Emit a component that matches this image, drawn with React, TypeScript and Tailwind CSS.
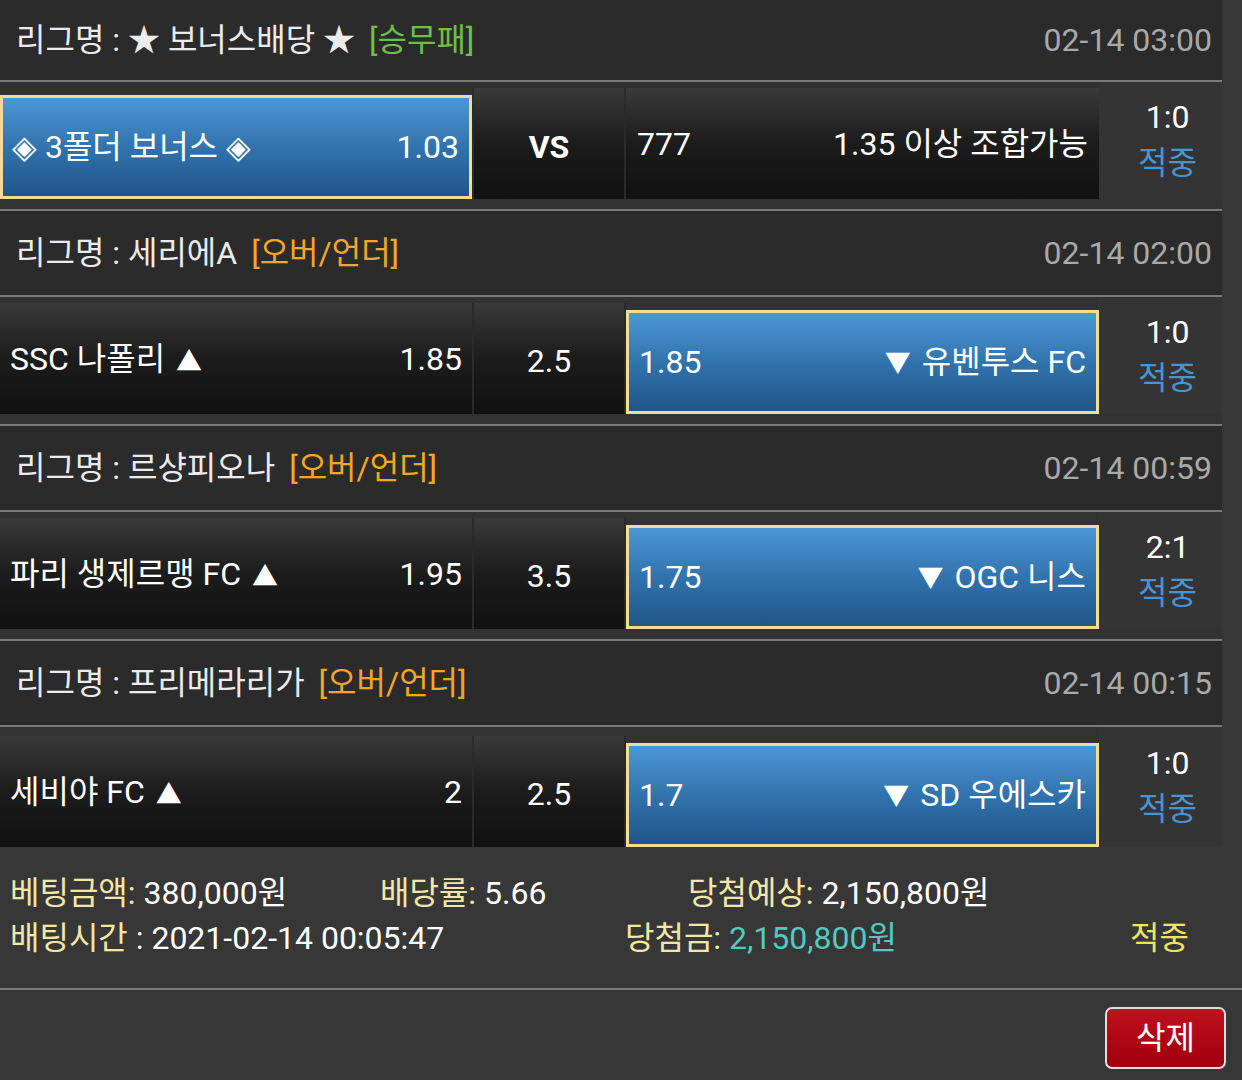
import React from "react";

type Match = {
  league: string;
  tag: string;
  tagColor: string;
  time: string;
  home: string;
  homeOdds: string;
  mid: string;
  midBold?: boolean;
  awayOdds: string;
  away: string;
  pick: "home" | "away";
  score: string;
};

const matches: Match[] = [
  {
    league: "리그명 : ★ 보너스배당 ★",
    tag: "[승무패]",
    tagColor: "text-[#6cc04a]",
    time: "02-14 03:00",
    home: "◈ 3폴더 보너스 ◈",
    homeOdds: "1.03",
    mid: "VS",
    midBold: true,
    awayOdds: "777",
    away: "1.35 이상 조합가능",
    pick: "home",
    score: "1:0",
  },
  {
    league: "리그명 : 세리에A",
    tag: "[오버/언더]",
    tagColor: "text-[#f5a623]",
    time: "02-14 02:00",
    home: "SSC 나폴리 ▲",
    homeOdds: "1.85",
    mid: "2.5",
    awayOdds: "1.85",
    away: "▼ 유벤투스 FC",
    pick: "away",
    score: "1:0",
  },
  {
    league: "리그명 : 르샹피오나",
    tag: "[오버/언더]",
    tagColor: "text-[#f5a623]",
    time: "02-14 00:59",
    home: "파리 생제르맹 FC ▲",
    homeOdds: "1.95",
    mid: "3.5",
    awayOdds: "1.75",
    away: "▼ OGC 니스",
    pick: "away",
    score: "2:1",
  },
  {
    league: "리그명 : 프리메라리가",
    tag: "[오버/언더]",
    tagColor: "text-[#f5a623]",
    time: "02-14 00:15",
    home: "세비야 FC ▲",
    homeOdds: "2",
    mid: "2.5",
    awayOdds: "1.7",
    away: "▼ SD 우에스카",
    pick: "away",
    score: "1:0",
  },
];

const darkCell =
  "h-[111px] bg-gradient-to-b from-[#3a3a3a] via-[#1c1c1c] to-[#111111]";
const pickCell =
  "h-[104px] border-[3px] border-[#f3dc95] bg-gradient-to-b from-[#4c97d6] via-[#3273ad] to-[#1f5689]";

// triangles render smaller than the text around them
const Team = ({ name }: { name: string }) => {
  const parts = name.split(/([▲▼])/);
  return (
    <span className="flex items-center">
      {parts.map((p, i) =>
        p === "▲" ? (
          <span key={i} className="text-[26px] mt-[7px] mx-[3px]">
            {p}
          </span>
        ) : p === "▼" ? (
          <span key={i} className="text-[26px] mt-[1px] mx-[3px]">
            {p}
          </span>
        ) : (
          <span key={i} className="whitespace-pre">
            {p}
          </span>
        )
      )}
    </span>
  );
};

const MatchBlock = ({ m, first, last }: { m: Match; first: boolean; last: boolean }) => {
  return (
    <div>
      <div
        className={`${first ? "h-[80px]" : "h-[84px]"} bg-[#2b2b2b] flex items-center justify-between pl-4 pr-[10px]`}
      >
        <div className="flex items-center gap-[14px] text-[#ebebeb]">
          <span>{m.league}</span>
          <span className={m.tagColor}>{m.tag}</span>
        </div>
        <span className="text-[#a9a9a9]">{m.time}</span>
      </div>
      <div className="h-[2px] bg-[#7a7a7a]" />
      <div
        className={`${last ? "h-[120px] pb-0" : "h-[127px] pb-[10px]"} bg-[#323232] flex items-end`}
      >
        <div
          className={`w-[472px] flex items-center justify-between text-white ${
            m.pick === "home" ? `${pickCell} pl-[9px] pr-[10px]` : `${darkCell} pl-[10px] pr-[10px]`
          }`}
        >
          <Team name={m.home} />
          <span>{m.homeOdds}</span>
        </div>
        <div className="w-[2px] h-[111px] bg-[#2a2a2a]" />
        <div
          className={`w-[150px] ${darkCell} flex items-center justify-center text-white ${
            m.midBold ? "font-bold pt-[6px]" : "pt-[4px]"
          }`}
        >
          {m.mid}
        </div>
        <div className="w-[2px] h-[111px] bg-[#2a2a2a]" />
        <div
          className={`w-[473px] flex items-center justify-between text-white ${
            m.pick === "away" ? `${pickCell} pl-[10px] pr-[10px]` : `${darkCell} pl-[11px] pr-[11px]`
          }`}
        >
          <span>{m.awayOdds}</span>
          <Team name={m.away} />
        </div>
        <div className="flex-1 self-stretch flex flex-col items-center justify-center bg-[#343434] leading-[46px] pl-[14px] pb-[2px]">
          <span className="text-white">{m.score}</span>
          <span className="text-[#4b93cf]">적중</span>
        </div>
      </div>
      {!last && <div className="h-[2px] bg-[#7a7a7a]" />}
    </div>
  );
};

export default function App() {
  return (
    <div
      className="w-[1242px] h-[1080px] bg-[#373737] text-[32px] leading-none overflow-hidden"
      style={{ fontFamily: "Roboto, 'Noto Sans CJK KR', sans-serif" }}
    >
      <div className="w-[1222px]">
        {matches.map((m, i) => (
          <MatchBlock key={i} m={m} first={i === 0} last={i === matches.length - 1} />
        ))}
      </div>

      <div className="h-[141px] flex flex-col justify-center gap-[13px] pb-[4px]">
        <div className="flex items-center">
          <div className="w-[380px] pl-[10px]">
            <span className="text-[#f2e7a6]">베팅금액:</span>
            <span className="text-white"> 380,000원</span>
          </div>
          <div className="w-[308px]">
            <span className="text-[#f2e7a6]">배당률:</span>
            <span className="text-white"> 5.66</span>
          </div>
          <div>
            <span className="text-[#f2e7a6]">당첨예상:</span>
            <span className="text-white"> 2,150,800원</span>
          </div>
        </div>
        <div className="flex items-center">
          <div className="w-[625px] pl-[10px]">
            <span className="text-[#f2e7a6]">배팅시간</span>
            <span className="text-white"> : 2021-02-14 00:05:47</span>
          </div>
          <div className="w-[505px]">
            <span className="text-[#f2e7a6]">당첨금:</span>
            <span className="text-[#52c9c2]"> 2,150,800원</span>
          </div>
          <span className="text-[#ece463]">적중</span>
        </div>
      </div>
      <div className="h-[2px] bg-[#7a7a7a]" />
      <div className="flex justify-end pt-[17px] pr-[16px]">
        <button className="w-[121px] h-[62px] rounded-[7px] border-2 border-[#e3dcdc] bg-gradient-to-b from-[#c0101e] to-[#a0000f] text-white text-[32px] flex items-center justify-center">
          삭제
        </button>
      </div>
    </div>
  );
}
